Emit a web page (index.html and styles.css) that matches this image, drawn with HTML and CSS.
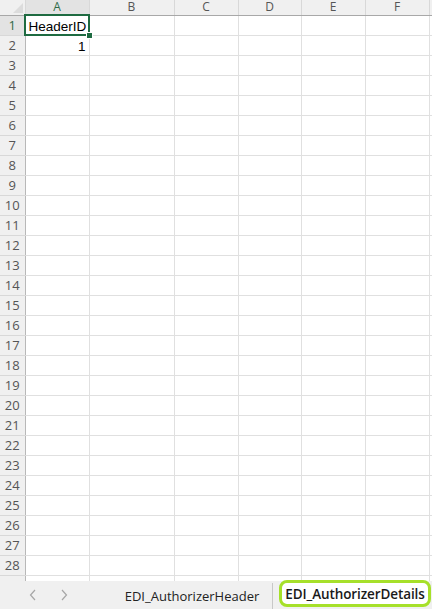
FILE: index.html
```html
<!DOCTYPE html>
<html>
<head>
<meta charset="utf-8">
<link rel="stylesheet" href="styles.css">
</head>
<body>
<div class="sheet">
  <table class="grid">
    <colgroup>
      <col class="c-rh"><col class="c-a"><col class="c-b"><col class="c-c"><col class="c-d"><col class="c-e"><col class="c-f"><col class="c-g">
    </colgroup>
    <thead>
      <tr>
        <th class="corner"><span class="tri"></span></th>
        <th class="colh sel">A</th><th class="colh">B</th><th class="colh">C</th><th class="colh">D</th><th class="colh">E</th><th class="colh">F</th><th class="colh"></th>
      </tr>
    </thead>
    <tbody id="rows">
      <tr><th class="rowh selr">1</th><td class="cell active">HeaderID</td><td></td><td></td><td></td><td></td><td></td><td></td></tr>
      <tr><th class="rowh">2</th><td class="num">1</td><td></td><td></td><td></td><td></td><td></td><td></td></tr>
      <tr><th class="rowh">3</th><td></td><td></td><td></td><td></td><td></td><td></td><td></td></tr>
      <tr><th class="rowh">4</th><td></td><td></td><td></td><td></td><td></td><td></td><td></td></tr>
      <tr><th class="rowh">5</th><td></td><td></td><td></td><td></td><td></td><td></td><td></td></tr>
      <tr><th class="rowh">6</th><td></td><td></td><td></td><td></td><td></td><td></td><td></td></tr>
      <tr><th class="rowh">7</th><td></td><td></td><td></td><td></td><td></td><td></td><td></td></tr>
      <tr><th class="rowh">8</th><td></td><td></td><td></td><td></td><td></td><td></td><td></td></tr>
      <tr><th class="rowh">9</th><td></td><td></td><td></td><td></td><td></td><td></td><td></td></tr>
      <tr><th class="rowh">10</th><td></td><td></td><td></td><td></td><td></td><td></td><td></td></tr>
      <tr><th class="rowh">11</th><td></td><td></td><td></td><td></td><td></td><td></td><td></td></tr>
      <tr><th class="rowh">12</th><td></td><td></td><td></td><td></td><td></td><td></td><td></td></tr>
      <tr><th class="rowh">13</th><td></td><td></td><td></td><td></td><td></td><td></td><td></td></tr>
      <tr><th class="rowh">14</th><td></td><td></td><td></td><td></td><td></td><td></td><td></td></tr>
      <tr><th class="rowh">15</th><td></td><td></td><td></td><td></td><td></td><td></td><td></td></tr>
      <tr><th class="rowh">16</th><td></td><td></td><td></td><td></td><td></td><td></td><td></td></tr>
      <tr><th class="rowh">17</th><td></td><td></td><td></td><td></td><td></td><td></td><td></td></tr>
      <tr><th class="rowh">18</th><td></td><td></td><td></td><td></td><td></td><td></td><td></td></tr>
      <tr><th class="rowh">19</th><td></td><td></td><td></td><td></td><td></td><td></td><td></td></tr>
      <tr><th class="rowh">20</th><td></td><td></td><td></td><td></td><td></td><td></td><td></td></tr>
      <tr><th class="rowh">21</th><td></td><td></td><td></td><td></td><td></td><td></td><td></td></tr>
      <tr><th class="rowh">22</th><td></td><td></td><td></td><td></td><td></td><td></td><td></td></tr>
      <tr><th class="rowh">23</th><td></td><td></td><td></td><td></td><td></td><td></td><td></td></tr>
      <tr><th class="rowh">24</th><td></td><td></td><td></td><td></td><td></td><td></td><td></td></tr>
      <tr><th class="rowh">25</th><td></td><td></td><td></td><td></td><td></td><td></td><td></td></tr>
      <tr><th class="rowh">26</th><td></td><td></td><td></td><td></td><td></td><td></td><td></td></tr>
      <tr><th class="rowh">27</th><td></td><td></td><td></td><td></td><td></td><td></td><td></td></tr>
      <tr><th class="rowh">28</th><td></td><td></td><td></td><td></td><td></td><td></td><td></td></tr>
      <tr><th class="rowh">29</th><td></td><td></td><td></td><td></td><td></td><td></td><td></td></tr>
    </tbody>
  </table>
</div>
<div class="tabbar">
  <div class="nav">
    <svg class="chev" width="8" height="12" viewBox="0 0 8 12"><path d="M6 1 L1.5 6 L6 11" fill="none" stroke="#a6a6a6" stroke-width="1.2"/></svg>
    <svg class="chev" width="8" height="12" viewBox="0 0 8 12"><path d="M2 1 L6.5 6 L2 11" fill="none" stroke="#a6a6a6" stroke-width="1.2"/></svg>
  </div>
  <div class="tab">EDI_AuthorizerHeader</div>
  <div class="tab current">EDI_AuthorizerDetails</div>
</div>
</body>
</html>
```
FILE: styles.css
```css
html, body {
  margin: 0;
  padding: 0;
  background: #ffffff;
}
body {
  width: 432px;
  height: 609px;
  overflow: hidden;
  font-family: "Liberation Sans", Arial, sans-serif;
}
.sheet {
  height: 581px;
  overflow: hidden;
}
.grid {
  border-collapse: collapse;
  table-layout: fixed;
  width: 432px;
}
.c-rh { width: 25px; }
.c-a { width: 64px; }
.c-b { width: 85px; }
.c-c { width: 64px; }
.c-d { width: 63px; }
.c-e { width: 64px; }
.c-f { width: 64px; }
.c-g { width: 3px; }
.grid th, .grid td {
  padding: 0;
  white-space: nowrap;
}
.grid td {
  overflow: hidden;
}
.grid thead th {
  height: 15px;
  box-sizing: border-box;
  background: #f0f0f0;
  border-right: 1px solid #d8d8d8;
  border-bottom: 1px solid #a8a8a8;
  font-family: "Open Sans", "Noto Sans", sans-serif;
  font-weight: normal;
  font-size: 12px;
  line-height: 14px;
  color: #555555;
  text-align: center;
  vertical-align: middle;
  overflow: visible;
}
.grid thead th.sel {
  background: #e3e3e3;
  color: #2f6b49;
  border-bottom: 1px solid #7a9f89;
}
.corner {
  position: relative;
}
.tri {
  position: absolute;
  right: 2px;
  bottom: 2px;
  width: 0;
  height: 0;
  border-left: 10px solid transparent;
  border-bottom: 10px solid #dcdcdc;
}
.grid tbody tr {
  height: 20px;
}
.rowh {
  background: #f0f0f0;
  border-right: 1px solid #b8b8b8;
  border-bottom: 1px solid #d8d8d8;
  font-family: "Open Sans", "Noto Sans", sans-serif;
  font-weight: normal;
  font-size: 13px;
  color: #555555;
  text-align: center;
  line-height: 18px;
  overflow: hidden;
}
.rowh.selr {
  background: #e3e3e3;
  color: #2f6b49;
}
.grid td {
  height: 19px;
  border-right: 1px solid #e0e0e0;
  border-bottom: 1px solid #e0e0e0;
  font-size: 13.5px;
  color: #000000;
  vertical-align: bottom;
  line-height: 17px;
}
.grid td.cell {
  padding-left: 3px;
}
.grid td.num {
  text-align: right;
  padding-right: 3px;
}
.grid td.active {
  position: relative;
  outline: 2px solid #1e6b41;
  outline-offset: -1px;
  overflow: visible;
}
.grid td.active::after {
  content: "";
  position: absolute;
  right: -4px;
  bottom: -4px;
  width: 5px;
  height: 5px;
  background: #1e6b41;
  border: 1px solid #ffffff;
}
.tabbar {
  height: 28px;
  background: #f0f0f0;
  display: flex;
  align-items: stretch;
  font-family: "Open Sans", "Noto Sans", sans-serif;
  font-size: 13px;
  color: #222222;
}
.nav {
  width: 112px;
  display: flex;
  align-items: center;
  padding-left: 29px;
  gap: 23px;
  box-sizing: border-box;
}
.chev {
  display: block;
}
.tab {
  display: flex;
  align-items: center;
  justify-content: center;
  width: 161px;
  border-right: 1px solid #c8c8c8;
  margin: 2px 0 0 0;
  box-sizing: border-box;
}
.tab.current {
  margin-left: 6px;
  width: 152px;
  background: #ffffff;
  border: 3px solid #a6e02a;
  border-radius: 8px;
  margin-top: -1px;
  margin-bottom: 2px;
  font-size: 13.5px;
  font-weight: 600;
  color: #1a1a1a;
  letter-spacing: -0.1px;
}
```
